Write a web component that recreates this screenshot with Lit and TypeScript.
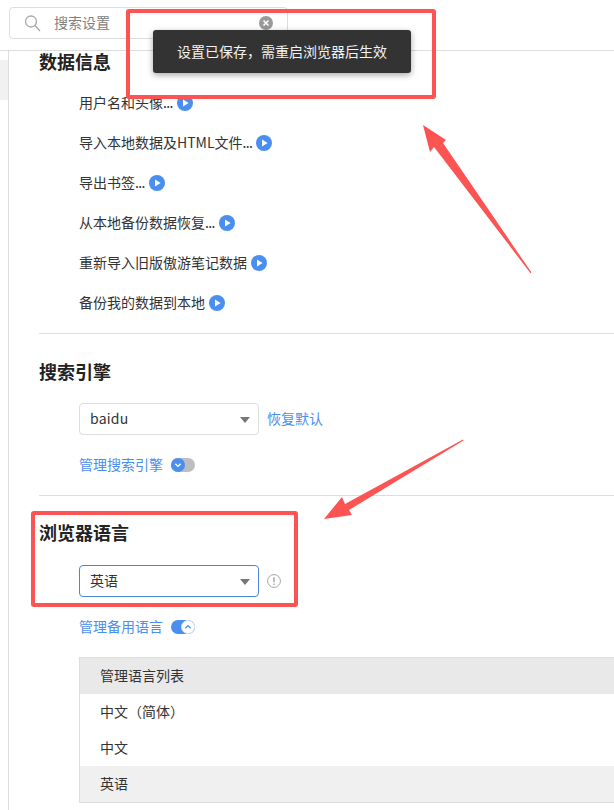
import { LitElement, html, css, svg } from "lit";
import { customElement } from "lit/decorators.js";

const play = html`<svg class="play" width="16" height="16" viewBox="0 0 16 16"><circle cx="8" cy="8" r="8" fill="#4a8ff0"/><path d="M6 4.4 L11.6 8 L6 11.6 Z" fill="#fff"/></svg>`;
const caret = html`<svg class="caret" width="10" height="6" viewBox="0 0 10 6"><path d="M0 0 H10 L5 6 Z" fill="#777"/></svg>`;

const rows = ["用户名和头像...", "导入本地数据及HTML文件...", "导出书签...", "从本地备份数据恢复...", "重新导入旧版傲游笔记数据", "备份我的数据到本地"];

@customElement("app-root")
export class AppRoot extends LitElement {
  static styles = css`
    :host { display: block; position: relative; width: 614px; height: 810px; overflow: hidden; background: #fff;
      font-family: "Noto Sans CJK SC", "Noto Sans", sans-serif; font-size: 14px; color: #333; }
    .top { border-bottom: 1px solid #ddd; padding: 7px 0 0 9px; box-sizing: border-box; height: 51px; }
    .search { width: 279px; height: 32px; box-sizing: border-box; border: 1px solid #ddd; border-radius: 4px; display: flex; align-items: center; padding: 0 14px; color: #808080; }
    .search span { margin-left: 12px; flex: 1; line-height: 20px; margin-top: -2px; }
    .main { display: grid; grid-template-columns: 9px 1fr; }
    .side { border-right: 1px solid #ddd; height: 760px; box-sizing: border-box; padding-top: 9px; }
    .side div { height: 40px; background: #f1f1f1; }
    .content { padding-left: 30px; }
    h2 { margin: 0; font-size: 18px; font-weight: 700; color: #222; height: 24px; line-height: 22px; }
    .first h2 { height: 22px; line-height: 20px; margin-bottom: 10px; }
    .lang h2 { line-height: 21px; }
    .sec { border-bottom: 1px solid #ddd; padding-bottom: 10px; }
    .sec.pad { padding-top: 26px; }
    .sec.last { border-bottom: 0; }
    .rows { padding-left: 40px; }
    .row { height: 40px; display: flex; align-items: center; gap: 4px; line-height: 20px; white-space: nowrap; }
    .txt { margin-top: -2px; line-height: 20px; }
    .dots { letter-spacing: -0.67px; }
    .selrow { display: flex; align-items: center; margin: 19px 0 10px 40px; gap: 8px; }
    .select { width: 180px; height: 32px; box-sizing: border-box; border: 1px solid #ddd; border-radius: 4px; padding: 0 7px 0 10px; display: flex; align-items: center; justify-content: space-between; color: #333; }
    .select.focus { border-color: #4a86d8; }
    .v { letter-spacing: 0.2px; }
    .caret { margin-right: 1px; margin-top: 1px; }
    .link { color: #4a8ff0; }
    .mng { margin-left: 40px; height: 40px; display: flex; align-items: center; gap: 8px; }
    .toggle { width: 24px; height: 14px; border-radius: 7px; position: relative; display: block; }
    .toggle.off { background: #bdbdc2; }
    .toggle.on { background: #4a8ff0; }
    .toggle svg { position: absolute; top: 0; }
    .knob-l { left: 0; }
    .knob-r { right: 0; }
    .table { margin: 10px 0 0 40px; border: 1px solid #ddd; border-right: 0; }
    .table div { height: 36px; line-height: 34px; padding-left: 20px; }
    .table .head { background: #e9e9e9; }
    .table .sel { background: #f0f0f0; }
    .overlay { position: absolute; left: 0; top: 0; pointer-events: none; }
    .toast { position: absolute; left: 153px; top: 30px; width: 258px; height: 43px; box-sizing: border-box; background: #333; color: #f2f2f2; border-radius: 3px; box-shadow: 0 2px 6px rgba(0,0,0,.35); padding-left: 24px; line-height: 43px; white-space: nowrap; }
    .clear { flex: none; }
  `;

  private rowText(t: string) {
    const plain = t.replace("...", "");
    return html`<span class="txt">${plain}${t.endsWith("...") ? html`<span class="dots">...</span>` : ""}</span>`;
  }

  render() {
    return html`
      <div class="top">
        <div class="search">
          <svg width="18" height="18" viewBox="0 0 18 18" fill="none" stroke="#a8a8a8" stroke-width="1.3"><circle cx="7" cy="7.5" r="5.5"/><path d="M11 11.5 L16 17"/></svg>
          <span>搜索设置</span>
          <svg class="clear" width="14" height="14" viewBox="0 0 14 14"><circle cx="7" cy="7" r="7" fill="#999"/><path d="M4.5 4.5 L9.5 9.5 M9.5 4.5 L4.5 9.5" stroke="#fff" stroke-width="1.5"/></svg>
        </div>
      </div>
      <div class="main">
        <div class="side"><div></div></div>
        <div class="content">
          <section class="sec first">
            <h2>数据信息</h2>
            <div class="rows">
              ${rows.map((t) => html`<div class="row">${this.rowText(t)}${play}</div>`)}
            </div>
          </section>
          <section class="sec pad">
            <h2>搜索引擎</h2>
            <div class="selrow">
              <div class="select"><span class="v txt">baidu</span>${caret}</div>
              <span class="link txt">恢复默认</span>
            </div>
            <div class="mng">
              <span class="link txt">管理搜索引擎</span>
              <span class="toggle off"><svg class="knob-l" width="14" height="14" viewBox="0 0 14 14"><circle cx="7" cy="7" r="7" fill="#4a8ff0"/><path d="M4.3 5.8 L7 8.4 L9.7 5.8" fill="none" stroke="#fff" stroke-width="1.4"/></svg></span>
            </div>
          </section>
          <section class="sec pad last lang">
            <h2>浏览器语言</h2>
            <div class="selrow">
              <div class="select focus"><span class="txt">英语</span>${caret}</div>
              <svg width="14" height="14" viewBox="0 0 14 14"><circle cx="7" cy="7" r="6.4" fill="none" stroke="#a5a5a5" stroke-width="1"/><path d="M7 3.2 V8.2 M7 9.6 V11" stroke="#a5a5a5" stroke-width="1.4"/></svg>
            </div>
            <div class="mng">
              <span class="link txt">管理备用语言</span>
              <span class="toggle on"><svg class="knob-r" width="14" height="14" viewBox="0 0 14 14"><circle cx="7" cy="7" r="6.5" fill="#fff" stroke="#dbe6f5"/><path d="M4.3 8.2 L7 5.6 L9.7 8.2" fill="none" stroke="#4a8ff0" stroke-width="1.4"/></svg></span>
            </div>
            <div class="table">
              <div class="head">管理语言列表</div>
              <div>中文（简体）</div>
              <div>中文</div>
              <div class="sel">英语</div>
            </div>
          </section>
        </div>
      </div>
      <div class="toast">设置已保存，需重启浏览器后生效</div>
      <svg class="overlay" width="614" height="810" viewBox="0 0 614 810">
        ${svg`
          <rect x="128" y="11" width="306" height="86" fill="none" stroke="#fc5353" stroke-width="4" rx="1"/>
          <rect x="33" y="513" width="263" height="92" fill="none" stroke="#fc5353" stroke-width="4" rx="1"/>
          <path d="M423 125 L446 140 L443 143 L531.5 272.6 L530.6 273.3 L434 147 L430 152 Z" fill="#fc5353"/>
          <path d="M324 519 L342 497 L345 504 L463 439.6 L463.5 440.5 L349 510 L352 515 Z" fill="#fc5353"/>
        `}
      </svg>
    `;
  }
}
